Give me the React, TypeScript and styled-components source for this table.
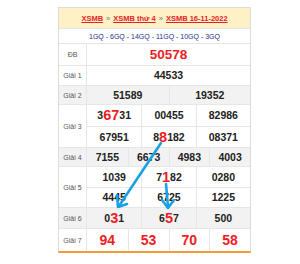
import React from "react";
import styled, { createGlobalStyle } from "styled-components";

const Global = createGlobalStyle`
  html, body { margin: 0; padding: 0; background: #fff; }
  body { font-family: "Liberation Sans", Arial, sans-serif; }
`;

const Frame = styled.div`
  position: relative;
  margin: 7px 0 0 58px;
  width: 193px;
  box-sizing: border-box;
  border: 1px solid #dcdcdc;
  border-bottom: 2px solid #f39a3a;
  background: #fff;
`;

const Header = styled.div`
  height: 20px;
  background: #fdf1c5;
  display: flex;
  align-items: center;
  justify-content: center;
  gap: 3px;
  font-size: 7.5px;
  font-weight: bold;
`;

const Crumb = styled.a`
  color: #e8202a;
  text-decoration: underline;
`;

const Sep = styled.span`
  color: #777;
  font-weight: normal;
`;

const GQ = styled.div`
  height: 15px;
  box-sizing: border-box;
  border-top: 1px solid #e6e6e6;
  display: flex;
  align-items: center;
  justify-content: center;
  font-size: 7px;
  color: #1f2d8a;
`;

const Row = styled.div<{ $h: number; $alt?: boolean }>`
  display: grid;
  grid-template-columns: 28px 1fr;
  height: ${(p) => p.$h}px;
  box-sizing: border-box;
  border-top: 1px solid #e6e6e6;
  background: ${(p) => (p.$alt ? "#f2f2f2" : "#fff")};
`;

const Label = styled.div`
  display: flex;
  align-items: center;
  justify-content: center;
  font-size: 7px;
  color: #555;
  border-right: 1px solid #e6e6e6;
`;

const Cells = styled.div<{ $cols: number }>`
  display: grid;
  grid-template-columns: repeat(${(p) => p.$cols}, 1fr);
  grid-auto-rows: 1fr;
`;

const Cell = styled.div<{ $first: boolean; $top: boolean; $size: number; $red: boolean }>`
  display: flex;
  align-items: center;
  justify-content: center;
  border-left: ${(p) => (p.$first ? "none" : "1px solid #e6e6e6")};
  border-top: ${(p) => (p.$top ? "none" : "1px solid #e6e6e6")};
  font-size: ${(p) => p.$size}px;
  font-weight: bold;
  color: ${(p) => (p.$red ? "#ee1c25" : "#222")};
  line-height: 1;
`;

const Hi = styled.span`
  color: #ee1c25;
  font-size: 14.5px;
`;

const Overlay = styled.svg`
  position: absolute;
  left: -1px;
  top: -1px;
  pointer-events: none;
`;

type Num = { v: string; hl?: [number, number] };
type Prize = {
  label: string;
  h: number;
  cols: number;
  alt?: boolean;
  size: number;
  red?: boolean;
  nums: Num[];
};

const prizes: Prize[] = [
  { label: "ĐB", h: 22, cols: 1, size: 13.5, red: true, nums: [{ v: "50578" }] },
  { label: "Giải 1", h: 20, cols: 1, size: 10.5, nums: [{ v: "44533" }] },
  { label: "Giải 2", h: 19, cols: 2, alt: true, size: 10.5, nums: [{ v: "51589" }, { v: "19352" }] },
  {
    label: "Giải 3",
    h: 43,
    cols: 3,
    size: 10.5,
    nums: [
      { v: "36731", hl: [1, 3] },
      { v: "00455" },
      { v: "82986" },
      { v: "67951" },
      { v: "88182", hl: [1, 2] },
      { v: "08371" },
    ],
  },
  {
    label: "Giải 4",
    h: 19,
    cols: 4,
    alt: true,
    size: 10.5,
    nums: [{ v: "7155" }, { v: "6673" }, { v: "4983" }, { v: "4003" }],
  },
  {
    label: "Giải 5",
    h: 41,
    cols: 3,
    size: 10.5,
    nums: [
      { v: "1039" },
      { v: "7182", hl: [1, 2] },
      { v: "0280" },
      { v: "4445" },
      { v: "6725" },
      { v: "1225" },
    ],
  },
  {
    label: "Giải 6",
    h: 21,
    cols: 3,
    alt: true,
    size: 10.5,
    nums: [{ v: "031", hl: [1, 2] }, { v: "657", hl: [1, 2] }, { v: "500" }],
  },
  {
    label: "Giải 7",
    h: 23,
    cols: 4,
    size: 14,
    red: true,
    nums: [{ v: "94" }, { v: "53" }, { v: "70" }, { v: "58" }],
  },
];

const renderNum = (n: Num) => {
  if (!n.hl) return n.v;
  const [a, b] = n.hl;
  return (
    <>
      {n.v.slice(0, a)}
      <Hi>{n.v.slice(a, b)}</Hi>
      {n.v.slice(b)}
    </>
  );
};

export default function App() {
  return (
    <>
      <Global />
      <Frame>
        <Header>
          <Crumb>XSMB</Crumb>
          <Sep>»</Sep>
          <Crumb>XSMB thứ 4</Crumb>
          <Sep>»</Sep>
          <Crumb>XSMB 16-11-2022</Crumb>
        </Header>
        <GQ>1GQ - 6GQ - 14GQ - 11GQ - 10GQ - 3GQ</GQ>
        {prizes.map((p) => (
          <Row key={p.label} $h={p.h} $alt={p.alt}>
            <Label>{p.label}</Label>
            <Cells $cols={p.cols}>
              {p.nums.map((n, i) => (
                <Cell
                  key={i}
                  $first={i % p.cols === 0}
                  $top={i < p.cols}
                  $size={p.size}
                  $red={!!p.red}
                >
                  {renderNum(n)}
                </Cell>
              ))}
            </Cells>
          </Row>
        ))}
        <Overlay width="193" height="246" viewBox="0 0 193 246">
          <g stroke="#1aa0e4" strokeWidth="2.6" fill="none" strokeLinecap="round" strokeLinejoin="round">
            <path d="M103 136 L61 199" />
            <path d="M59 188 L60 200 L69 197" />
            <path d="M108 177 L110 200" />
            <path d="M104 193 L110 201 L116 193" />
          </g>
        </Overlay>
      </Frame>
    </>
  );
}
